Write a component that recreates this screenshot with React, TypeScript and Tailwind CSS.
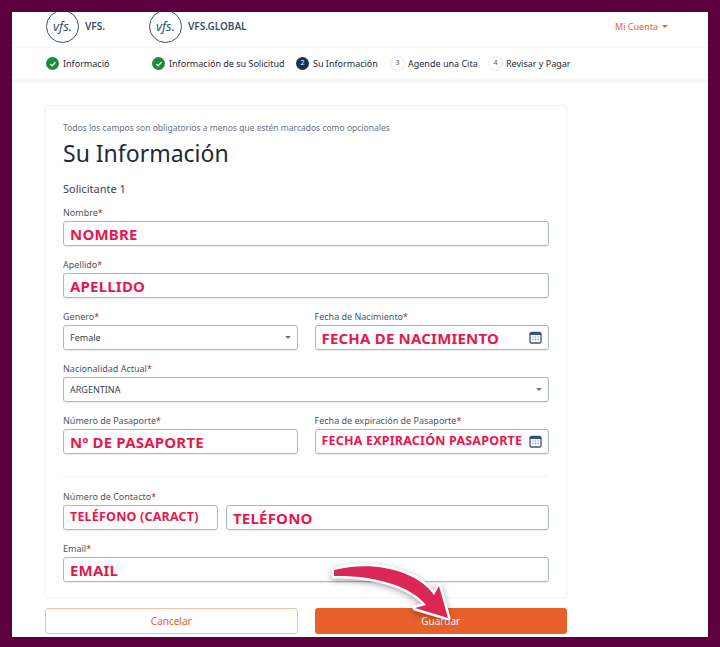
import React from "react";

const pink = "text-[#e8174f]";

function Check() {
  return (
    <span className="w-[13px] h-[13px] rounded-full bg-[#1e8a3c] flex items-center justify-center">
      <svg width="8" height="8" viewBox="0 0 8 8"><path d="M1.5 4.2 3.2 5.8 6.5 2.3" stroke="white" strokeWidth="1.3" fill="none" /></svg>
    </span>
  );
}

function Num({ n, active }: { n: string; active?: boolean }) {
  return (
    <span className={`w-[13px] h-[13px] rounded-full flex items-center justify-center text-[7px] ${active ? "bg-[#12335b] text-white" : "bg-white text-gray-600 shadow-[0_0_2px_rgba(0,0,0,0.25)]"}`}>{n}</span>
  );
}

function Logo() {
  return (
    <span className="w-[33px] h-[33px] rounded-full border border-[#3b4f73] flex items-center justify-center text-[#3b4f73] italic text-[13px] font-['Liberation_Serif'] -mt-[6px]">vfs.</span>
  );
}

function Label({ t }: { t: string }) {
  return (
    <div className="text-[9px] text-gray-600 mb-[3px] h-[11px] leading-[11px]">
      {t}<span className="text-[#c0262d]">*</span>
    </div>
  );
}

function Field({ children, cls = "" }: { children: React.ReactNode; cls?: string }) {
  return (
    <div className={`h-[25px] border border-[#a9b7c6] rounded-[3px] flex items-center px-[6px] shadow-[0_1px_1px_rgba(0,0,0,0.08)] ${cls}`}>{children}</div>
  );
}

function Big({ t, size = "text-[15px]" }: { t: string; size?: string }) {
  return <span className={`${pink} font-bold ${size} font-['Inter'] tracking-[0.2px]`}>{t}</span>;
}

function Cal() {
  return (
    <svg width="13" height="13" viewBox="0 0 13 13" className="ml-auto">
      <rect x="1" y="1.5" width="11" height="10.5" rx="1.5" fill="none" stroke="#3b5078" strokeWidth="1.3" />
      <rect x="1" y="1.5" width="11" height="2.5" fill="#3b5078" />
      {[4, 6.5, 9].map((x) => [6, 8.5].map((y) => <rect key={x + "-" + y} x={x - 0.6} y={y - 0.6} width="1.3" height="1.3" fill="#8a9ab5" />))}
    </svg>
  );
}

function Caret() {
  return <span className="ml-auto w-0 h-0 border-l-[3px] border-r-[3px] border-t-[3px] border-l-transparent border-r-transparent border-t-gray-500" />;
}

export default function App() {
  return (
    <div className="w-[720px] h-[647px] bg-[#5c0040] pt-[12px] px-[12px] pb-[10px] font-['Inter',sans-serif]">
      <div className="relative w-full h-full bg-white overflow-hidden">
        <header className="h-[36px] flex items-center border-b border-gray-100">
          <div className="flex items-center gap-[6px] ml-[34px]"><Logo /><span className="text-[10px] font-semibold text-[#3b4f73] -mt-[6px]">VFS.</span></div>
          <div className="flex items-center gap-[6px] ml-[44px]"><Logo /><span className="text-[10px] font-semibold text-[#3b4f73] -mt-[6px]">VFS.GLOBAL</span></div>
          <div className="ml-auto mr-[40px] flex items-center gap-[4px] text-[9px] text-[#e8612a] -mt-[6px]">Mi Cuenta <span className="w-0 h-0 border-l-[3px] border-r-[3px] border-t-[3px] border-l-transparent border-r-transparent border-t-[#e8612a]" /></div>
        </header>
        <nav className="h-[32px] flex items-center text-[9px] text-gray-800 shadow-[0_2px_3px_rgba(0,0,0,0.05)] border-b border-gray-100">
          <div className="flex items-center gap-[4px] ml-[34px] w-[106px]"><Check />Informació</div>
          <div className="flex items-center gap-[4px] w-[144px]"><Check />Información de su Solicitud</div>
          <div className="flex items-center gap-[4px] w-[95px]"><Num n="2" active />Su Información</div>
          <div className="flex items-center gap-[4px] w-[98px]"><Num n="3" />Agende una Cita</div>
          <div className="flex items-center gap-[4px]"><Num n="4" />Revisar y Pagar</div>
        </nav>

        <div className="ml-[33px] mt-[25px] w-[522px] h-[493px] border border-gray-100 rounded-[3px] shadow-[0_0_3px_rgba(0,0,0,0.04)] px-[17px] pt-[16px]">
          <div className="text-[8.5px] text-gray-500">Todos los campos son obligatorios a menos que estén marcados como opcionales</div>
          <h1 className="text-[23px] text-gray-800 mt-[3px] leading-[30px]">Su Información</h1>
          <div className="text-[11px] text-gray-700 mt-[13px] mb-[10px]">Solicitante 1</div>

          <div className="flex flex-col gap-[13px]">
            <div><Label t="Nombre" /><Field><Big t="NOMBRE" /></Field></div>
            <div><Label t="Apellido" /><Field><Big t="APELLIDO" /></Field></div>
            <div className="grid grid-cols-2 gap-[17px]">
              <div><Label t="Genero" /><Field><span className="text-[9px] text-gray-700">Female</span><Caret /></Field></div>
              <div><Label t="Fecha de Nacimiento" /><Field><Big t="FECHA DE NACIMIENTO" /><Cal /></Field></div>
            </div>
            <div><Label t="Nacionalidad Actual" /><Field><span className="text-[9px] text-gray-700">ARGENTINA</span><Caret /></Field></div>
            <div className="grid grid-cols-2 gap-[17px]">
              <div><Label t="Número de Pasaporte" /><Field><Big t="Nº DE PASAPORTE" /></Field></div>
              <div><Label t="Fecha de expiración de Pasaporte" /><Field><Big t="FECHA EXPIRACIÓN PASAPORTE" size="text-[12.5px]" /><Cal /></Field></div>
            </div>
          </div>
          <div className="border-t border-gray-100 mt-[22px] mb-[14px]" />
          <div className="flex flex-col gap-[13px]">
            <div>
              <Label t="Número de Contacto" />
              <div className="flex gap-[8px]">
                <Field cls="w-[155px]"><Big t="TELÉFONO (CARACT)" size="text-[12.5px]" /></Field>
                <Field cls="flex-1"><Big t="TELÉFONO" /></Field>
              </div>
            </div>
            <div><Label t="Email" /><Field><Big t="EMAIL" /></Field></div>
          </div>
        </div>

        <div className="ml-[33px] mt-[10px] w-[522px] grid grid-cols-2 gap-[17px]">
          <button className="h-[26px] border border-[#f0c2a8] rounded-[3px] text-[10px] text-[#e8612a]">Cancelar</button>
          <button className="h-[26px] bg-[#e8612a] rounded-[3px] text-[10px] text-white">Guardar</button>
        </div>

        <svg className="absolute left-[310px] top-[538px] drop-shadow-[0_2px_3px_rgba(0,0,0,0.35)]" width="140" height="70" viewBox="0 0 140 70">
          <path d="M12 20 C50 10 95 20 112 45 L117 36 L126 68 L93 58 L104 55 C88 35 50 25 12 26 Z" fill="#dc2756" stroke="white" strokeWidth="5" strokeLinejoin="round" paintOrder="stroke" />
        </svg>
      </div>
    </div>
  );
}
